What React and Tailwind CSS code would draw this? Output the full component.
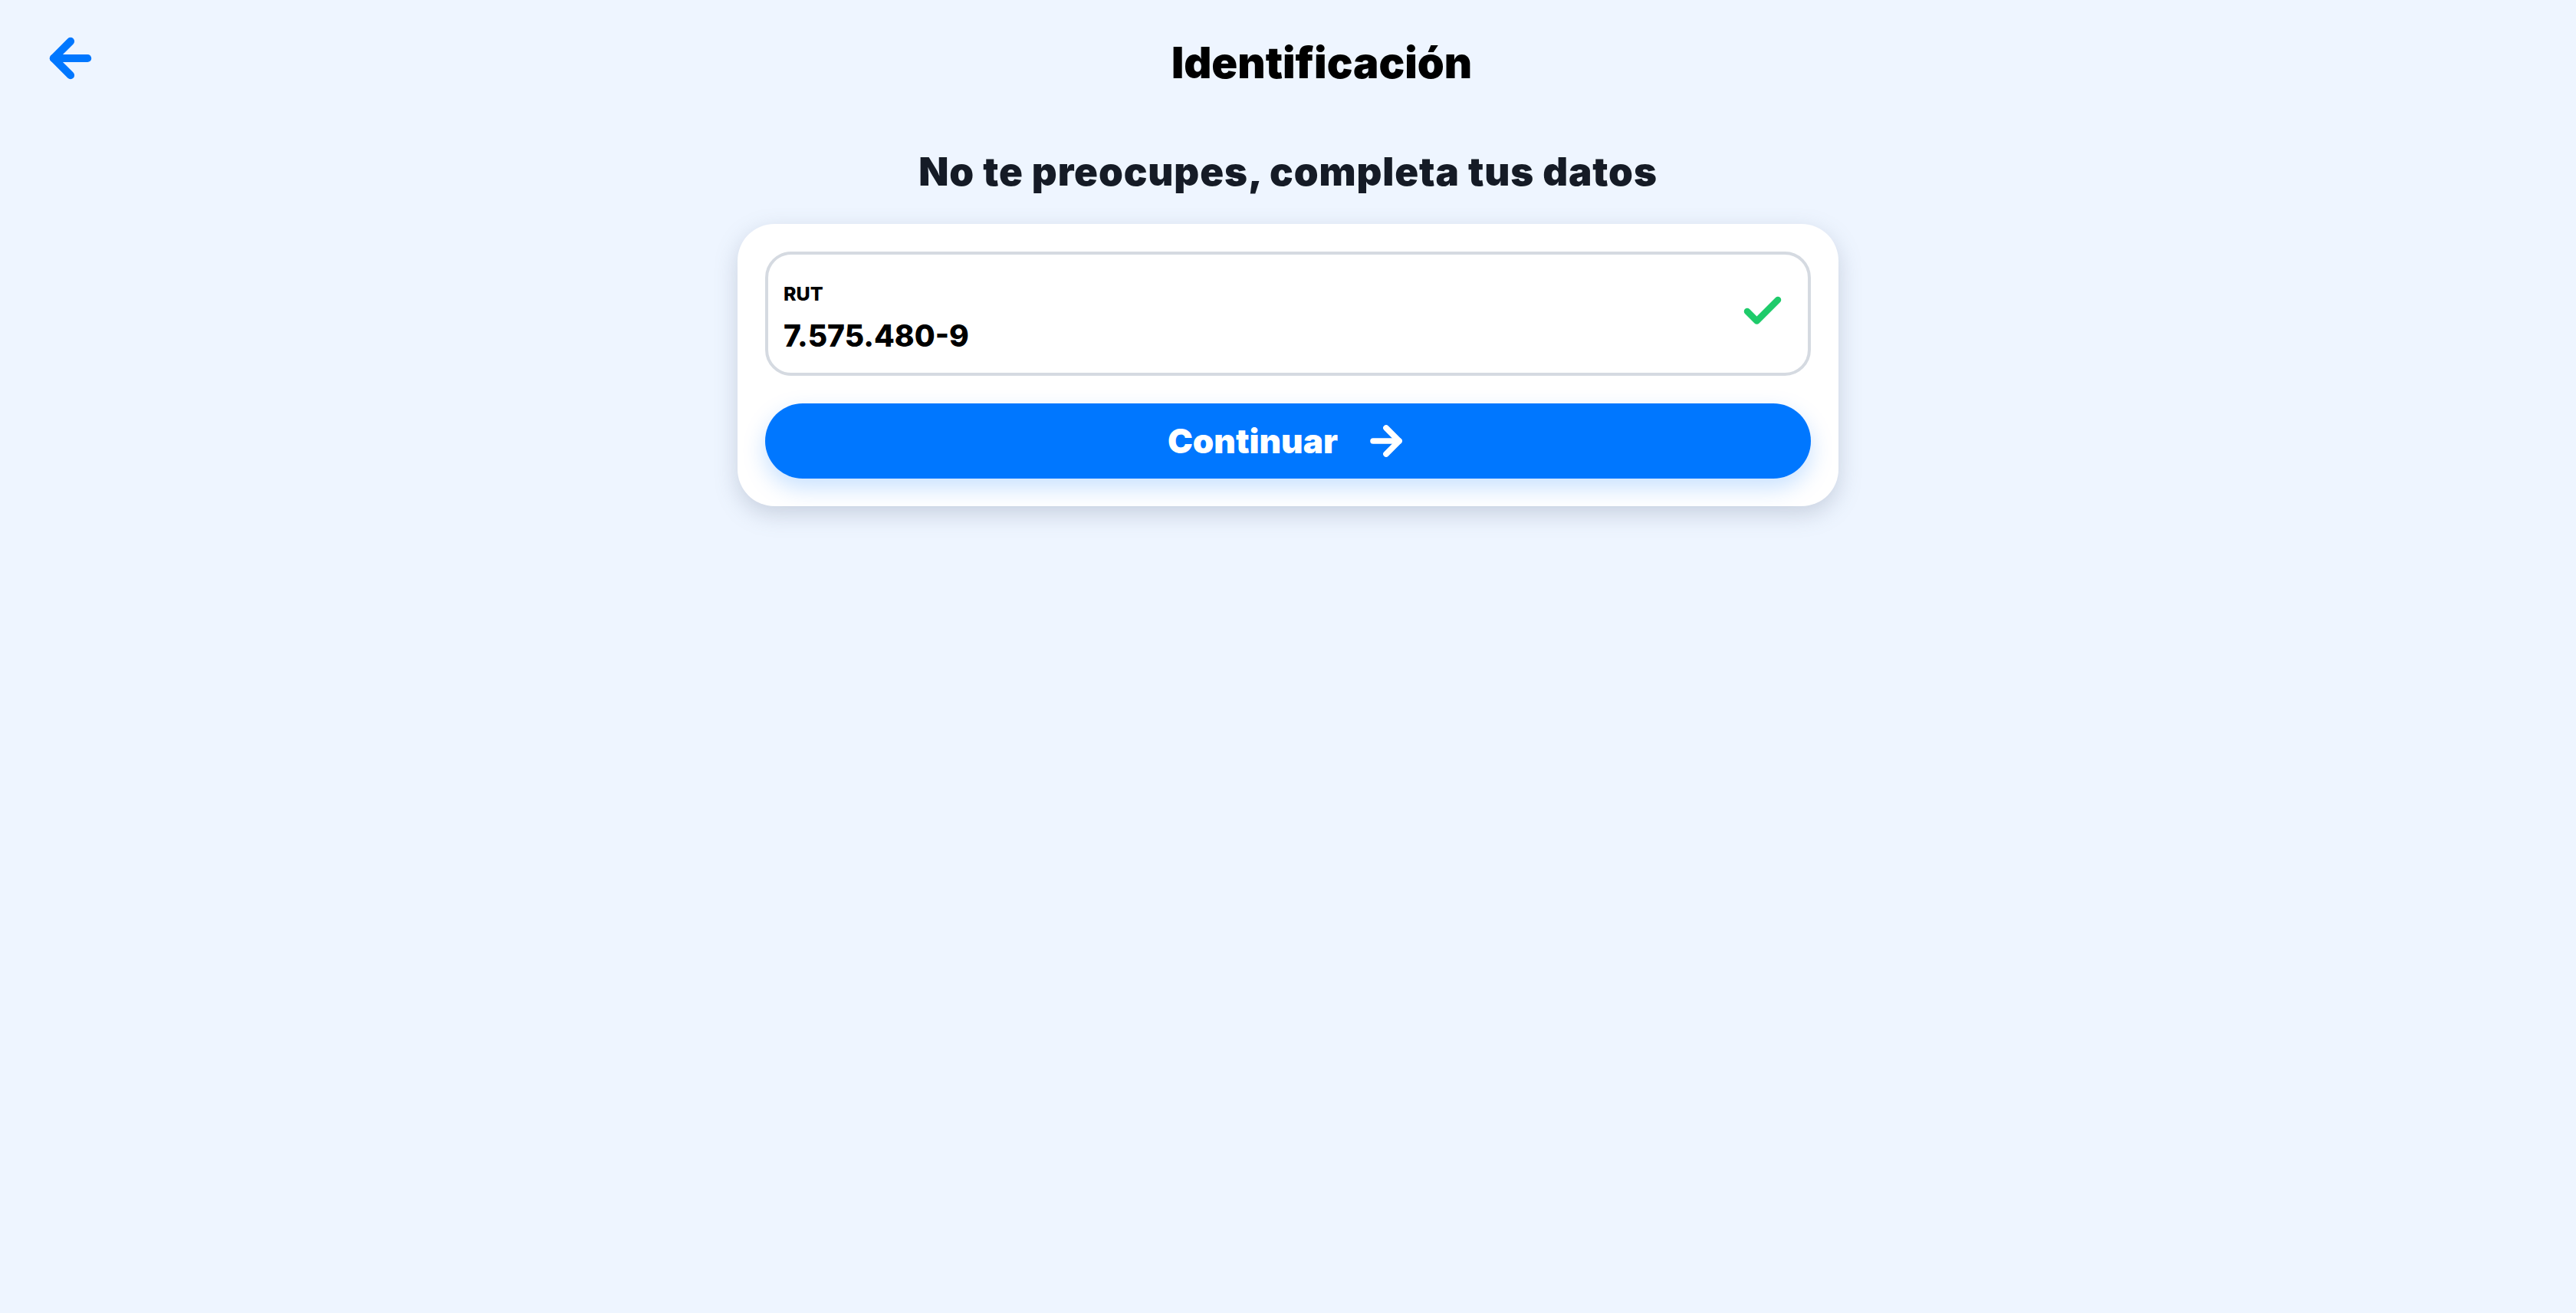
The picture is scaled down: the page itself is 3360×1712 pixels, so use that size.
import React, { useState } from 'react';
import { ArrowLeft, ArrowRight, Check } from 'lucide-react';

const App = () => {
  const [rut] = useState('7.575.480-9');

  return (
    <div className="min-h-screen bg-[#eef5ff] font-['Inter','Roboto',sans-serif]">
      {/* Header */}
      <header className="flex items-center px-12 pt-8">
        <button className="w-[88px] h-[88px] flex items-center justify-center text-[#0077ff]">
          <ArrowLeft size={76} strokeWidth={3.2} />
        </button>
        <h1 className="flex-1 mt-3 text-center text-[56px] leading-none font-black text-black">
          Identificación
        </h1>
      </header>

      {/* Subtitle */}
      <h2 className="mt-[78px] text-center text-[51px] leading-none font-black tracking-[0.9px] text-[#151b26]">
        No te preocupes, completa tus datos
      </h2>

      {/* Card */}
      <div className="mx-auto mt-[43px] w-[1436px] rounded-[48px] bg-white p-9 shadow-[0_10px_30px_rgba(100,116,139,0.28)]">
        {/* RUT input */}
        <div className="h-[162px] flex items-center rounded-[34px] border-4 border-[#d5dae1] pl-5 pr-[29px]">
          <div className="flex-1 mt-[9px] flex flex-col gap-[22px]">
            <span className="text-[25px] leading-none font-extrabold text-black">RUT</span>
            <span className="text-[39px] leading-none font-extrabold text-black">{rut}</span>
          </div>
          <Check size={60} strokeWidth={3.4} className="text-[#1ecb6a] mb-[6px]" />
        </div>

        {/* Continue button */}
        <button className="mt-9 w-full h-[98px] flex items-center justify-center gap-[34px] rounded-full bg-[#0077ff] text-white shadow-[0_12px_30px_rgba(0,119,255,0.22)]">
          <span className="text-[44px] leading-none font-black">Continuar</span>
          <ArrowRight size={58} strokeWidth={3.2} />
        </button>
      </div>
    </div>
  );
};

export default App;
